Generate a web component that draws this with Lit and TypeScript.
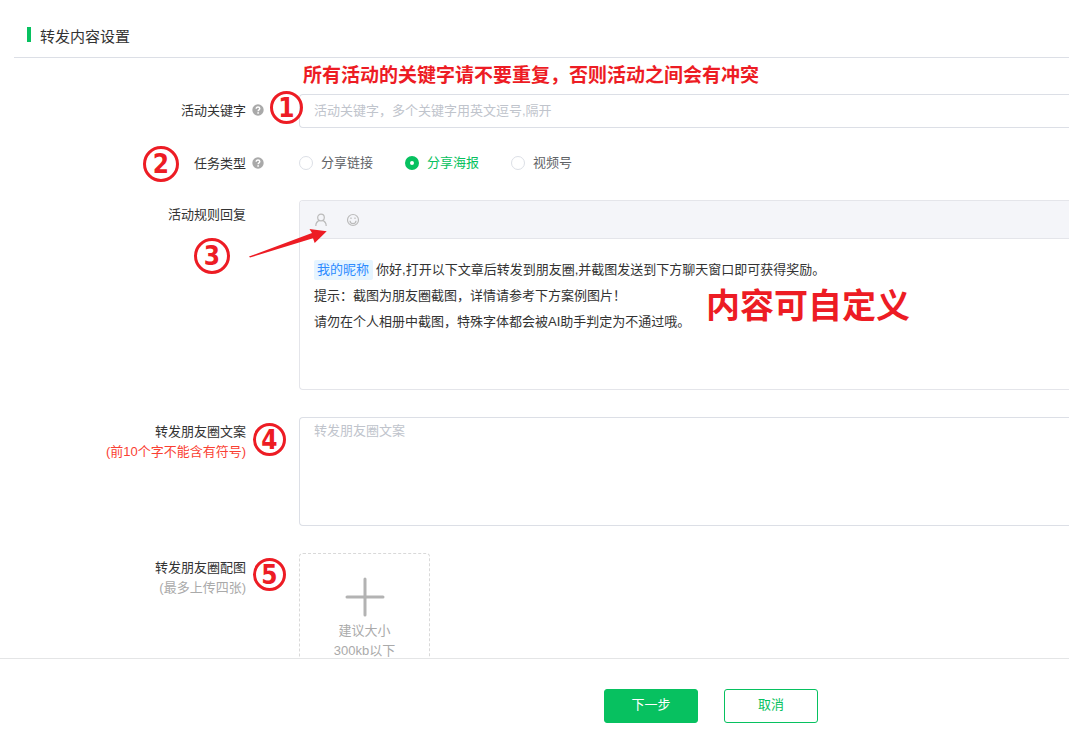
import { LitElement, html, css, svg } from "lit";
import { customElement, state } from "lit/decorators.js";

const helpIcon = html`<svg class="help" viewBox="0 0 12 12" aria-hidden="true">
  <circle cx="6" cy="6" r="5.7" fill="#a9a9a9" />
  <path d="M4.2 4.8C4.2 3.6 5 3 6 3s1.8.6 1.8 1.6C7.8 5.8 6.1 5.9 6.1 7.2" fill="none" stroke="#fff" stroke-width="1.4" />
  <circle cx="6.1" cy="8.9" r=".85" fill="#fff" />
</svg>`;

const userIcon = svg`<circle cx="7" cy="4.500" r="3.300" /><path d="M1.800 13c0-3 1.600-4.800 3.700-5.600M12.200 13c0-3-1.600-4.800-3.700-5.600" />`;
const smileIcon = svg`<circle cx="7" cy="7" r="5.500" /><path d="M4 7.800a3 2.800 0 0 0 6 0M5 4.500v1.600M9 4.500v1.600" />`;

@customElement("app-root")
export class AppRoot extends LitElement {
  static styles = css`
    :host {
      display: flex;
      flex-direction: column;
      height: 100vh;
      background: #fff;
      color: #333;
      font: 13px/20px "Liberation Sans", "Noto Sans CJK SC", sans-serif;
    }
    * { box-sizing: border-box; }
    button, input, textarea { font: inherit; color: inherit; margin: 0; }
    main { flex: 1; min-height: 0; overflow: hidden; }
    header {
      display: flex;
      align-items: center;
      gap: 9px;
      height: 58px;
      margin-left: 14px;
      padding: 16px 0 0 13px;
      border-bottom: 1px solid #dcdfe6;
    }
    .bar { width: 4px; height: 15px; background: #07c160; margin-bottom: 5px; }
    h1 { margin: 0; font-size: 15px; font-weight: 400; }
    form { padding-top: 36px; }
    .row {
      position: relative;
      display: grid;
      grid-template-columns: 246px 53px minmax(0, 1fr);
      margin-bottom: 27px;
    }
    .row.short { margin-bottom: 18px; min-height: 35px; }
    .label { padding-top: 5px; text-align: right; }
    .short .label { padding-top: 7px; }
    .label span { display: block; }
    .warn { color: #fa3f33; }
    .muted { color: #aaa; }
    .help { width: 12px; height: 12px; margin: 10px 0 0 6px; }
    .field {
      display: block;
      width: 100%;
      border: 1px solid #dcdfe6;
      border-right: 0;
      border-radius: 4px 0 0 4px;
      background: #fff;
      outline: none;
    }
    input.field { height: 34px; padding: 0 14px 2px; }
    textarea.field { height: 109px; padding: 3px 14px; resize: none; }
    ::placeholder { color: #c0c4cc; opacity: 1; }
    .radios { display: flex; align-items: flex-start; gap: 32px; padding-top: 6px; }
    .option { display: flex; align-items: center; gap: 8px; color: #606266; height: 20px; }
    .option.on { color: #07c160; }
    .option input {
      appearance: none;
      width: 14px;
      height: 14px;
      border: 1px solid #dcdfe6;
      border-radius: 50%;
      background: #fff;
    }
    .option input:checked { border: 5px solid #07c160; }
    .editor { height: 190px; border-color: #e4e5ea; overflow: hidden; }
    .tools {
      display: flex;
      align-items: center;
      gap: 18px;
      height: 38px;
      padding-left: 14px;
      background: #f4f5f9;
      border-bottom: 1px solid #e4e5ea;
    }
    .tools button { padding: 0; border: 0; background: none; width: 14px; height: 14px; }
    .tools svg { display: block; width: 14px; height: 14px; fill: none; stroke: #bbb; stroke-width: 1.2; }
    .text { padding: 18px 14px; line-height: 26px; outline: none; }
    .text p { margin: 0; }
    .tag { padding: 0 4px 0 3px; margin-right: 3px; border-radius: 2px; background: #e6f5ff; color: #2d8cff; display: inline-block; line-height: 20px; }
    .upload {
      display: flex;
      flex-direction: column;
      align-items: center;
      width: 131px;
      height: 131px;
      padding: 23px 0 0;
      border: 1px dashed #d9d9d9;
      border-radius: 4px;
      background: #fff;
      color: #aaa;
    }
    .upload svg { width: 40px; height: 40px; margin-bottom: 4px; }
    footer {
      display: flex;
      justify-content: center;
      gap: 26px;
      padding: 30px 0 15px 353px;
      border-top: 1px solid #e4e5e6;
    }
    footer button {
      width: 94px;
      height: 34px;
      padding: 0 0 2px;
      border: 1px solid #07c160;
      border-radius: 3px;
      background: #fff;
      color: #07c160;
    }
    footer .primary { background: #07c160; color: #fff; }

    .note { position: absolute; color: #ed1c24; font-weight: 700; white-space: nowrap; pointer-events: none; }
    .tip { left: 303px; top: -33px; font-size: 19px; line-height: 30px; }
    .custom { left: 706px; top: 82px; font-size: 34px; line-height: 48px; }
    .step {
      display: flex;
      align-items: center;
      justify-content: center;
      width: 33px;
      height: 33px;
      border: 3px solid #ed1c24;
      border-radius: 50%;
      font: 700 26px/26px "DejaVu Sans Condensed", "DejaVu Sans", sans-serif;
    }
    .s1 { left: 270px; top: -3px; }
    .s2 { left: 143px; top: -1px; width: 36px; height: 36px; }
    .s3 { left: 194px; top: 38px; width: 36px; height: 36px; }
    .s4 { left: 253px; top: 6px; }
    .s5 { left: 253px; top: 5px; }
    .arrow { left: 248px; top: 28px; width: 80px; height: 32px; }
  `;

  @state() private type = "分享海报";

  render() {
    return html`
      <main>
        <header><span class="bar"></span><h1>转发内容设置</h1></header>
        <form>
          <div class="row short">
            <label class="label" for="keyword">活动关键字</label>
            <span>${helpIcon}</span>
            <input class="field" id="keyword" type="text" placeholder="活动关键字，多个关键字用英文逗号,隔开" />
            <span class="note tip">所有活动的关键字请不要重复，否则活动之间会有冲突</span>
            <span class="note step s1">1</span>
          </div>

          <div class="row short" role="radiogroup" aria-labelledby="type">
            <span class="label" id="type">任务类型</span>
            <span>${helpIcon}</span>
            <div class="radios">
              ${["分享链接", "分享海报", "视频号"].map(
                (name) => html`<label class="option ${name === this.type ? "on" : ""}">
                  <input type="radio" name="type" .checked=${name === this.type} @change=${() => (this.type = name)} />${name}
                </label>`
              )}
            </div>
            <span class="note step s2">2</span>
          </div>

          <div class="row">
            <span class="label" id="rule">活动规则回复</span>
            <span></span>
            <div class="field editor">
              <div class="tools">
                <button type="button" aria-label="昵称"><svg viewBox="0 0 14 14">${userIcon}</svg></button>
                <button type="button" aria-label="表情"><svg viewBox="0 0 14 14">${smileIcon}</svg></button>
              </div>
              <div class="text" contenteditable="true" role="textbox" aria-multiline="true" aria-labelledby="rule" spellcheck="false">
                <p><span class="tag">我的昵称</span>你好,打开以下文章后转发到朋友圈,并截图发送到下方聊天窗口即可获得奖励。</p>
                <p>提示：截图为朋友圈截图，详情请参考下方案例图片！</p>
                <p>请勿在个人相册中截图，特殊字体都会被AI助手判定为不通过哦。</p>
              </div>
            </div>
            <span class="note step s3">3</span>
            <svg class="note arrow" viewBox="0 0 80 32" aria-hidden="true">
              <path d="M1 28.500L64 5 61.500 1 78.700 3.300 66.700 15 65 10.200 2 29.500z" fill="#ed1c24" />
            </svg>
            <span class="note custom">内容可自定义</span>
          </div>

          <div class="row">
            <label class="label" for="copy"><span>转发朋友圈文案</span><span class="warn">(前10个字不能含有符号)</span></label>
            <span></span>
            <textarea class="field" id="copy" placeholder="转发朋友圈文案"></textarea>
            <span class="note step s4">4</span>
          </div>

          <div class="row">
            <label class="label" for="upload"><span>转发朋友圈配图</span><span class="muted">(最多上传四张)</span></label>
            <span></span>
            <button class="upload" id="upload" type="button">
              <svg viewBox="0 0 40 40" aria-hidden="true">
                <path d="M20 2V38M2 20H38" stroke="#b3b3b3" stroke-width="3" stroke-linecap="round" />
              </svg>
              <span>建议大小</span><span>300kb以下</span>
            </button>
            <span class="note step s5">5</span>
          </div>
        </form>
      </main>
      <footer>
        <button class="primary" type="button">下一步</button>
        <button type="button">取消</button>
      </footer>
    `;
  }
}
